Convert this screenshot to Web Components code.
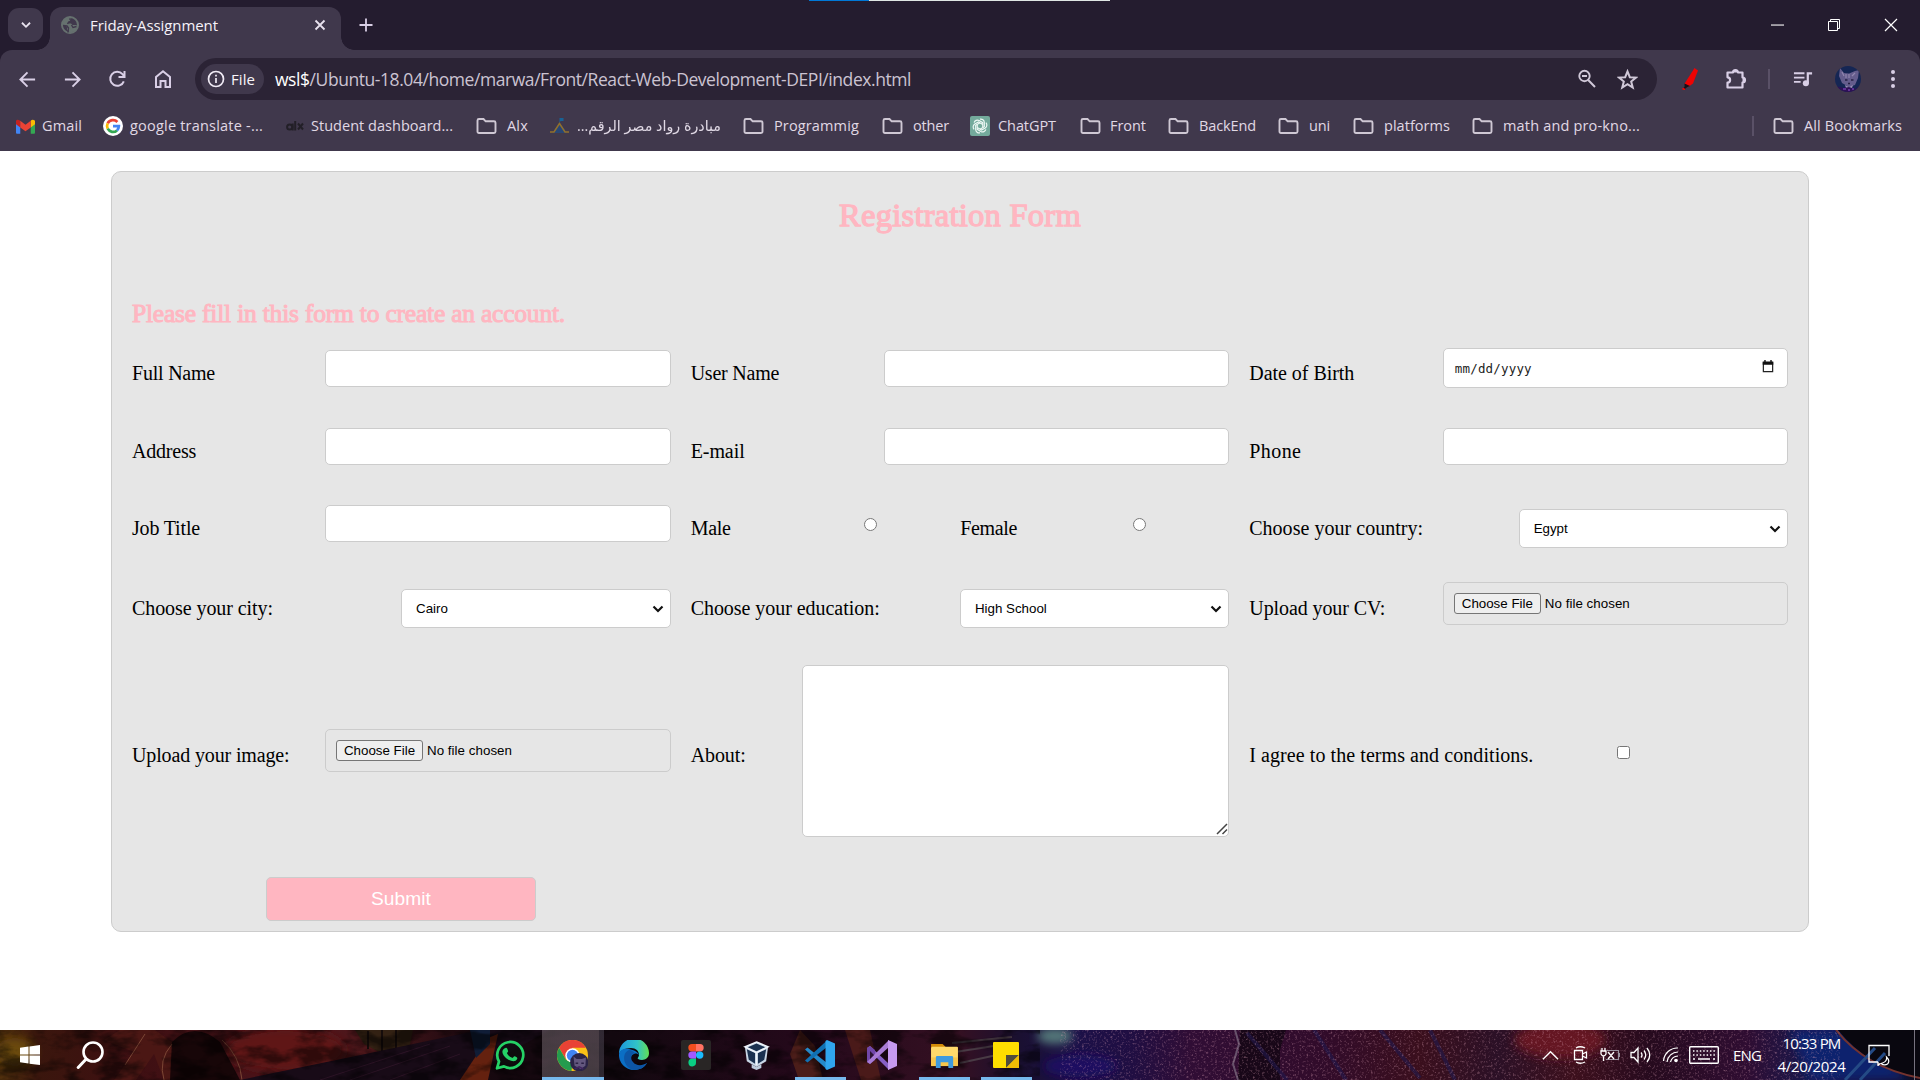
<!DOCTYPE html>
<html lang="en">
<head>
<meta charset="utf-8">
<title>Friday-Assignment</title>
<style>
html,body{margin:0;width:1920px;height:1080px;overflow:hidden;background:#fff}
</style>
</head>
<body>
<desktop-screen></desktop-screen>
<script>
const define=(name,css,html,after)=>customElements.define(name,class extends HTMLElement{
  connectedCallback(){
    if(this.shadowRoot)return;
    const root=this.attachShadow({mode:'open'});
    root.innerHTML=`<style>*{box-sizing:border-box}${css}</style>`+(typeof html==='function'?html(this):html);
    if(after)after(this,root);
  }
});

/* One line of text set to a fixed measure. */
define('fit-text',':host{display:inline-block;white-space:nowrap;flex:none}span{display:inline-block;transform-origin:0 50%}','<span><slot></slot></span>',(el,root)=>{
  const w=+el.getAttribute('w');if(!w)return;
  const s=root.querySelector('span'),n=s.getBoundingClientRect().width;
  el.style.width=w+'px';
  if(el.hasAttribute('squeeze'))s.style.transform=`scaleX(${w/n})`;
  else s.style.letterSpacing=(w-n)/el.textContent.length+'px';
});

const icons={
  chev:['0 0 20 20','<path d="M5.500 7.500 10 12l4.500-4.500" fill="none" stroke="#e8e2ee" stroke-width="2"/>'],
  globe:['0 0 18 18','<circle cx="9" cy="9" r="8" fill="#40384c" stroke="#66716f" stroke-width="2"/><path d="M8 1 3.500 3 1 7.500 1.500 10H5l1 1.500v2L9 17l6-2.500L17 10l-2-1h-3.500L10 7.500H7V6l3-1V3z" fill="#66716f"/><path d="M8.500 2.500 10 5 7.500 6.200 6.500 8M2 9.500l4 .5 1.500 2-.5 4.500M10.500 9l1.500 2.500 3.500-1" fill="none" stroke="#40384c" stroke-width="1.400"/>'],
  x:['0 0 12 12','<path d="m1.500 1.500 9 9m0-9-9 9" stroke="#e8e2ee" stroke-width="1.800"/>'],
  plus:['0 0 14 14','<path d="M7 .5v13M.5 7h13" stroke="#d9cfe6" stroke-width="1.800"/>'],
  min:['0 0 12 12','<path d="M0 6.500h12" stroke="#fff" stroke-width="1"/>'],
  restore:['0 0 14 14','<path d="M1.500 3.500h9v9h-9zM3.500 3V1.500h9v9H11" fill="none" stroke="#fff"/>'],
  close:['0 0 14 14','<path d="m1 1 12 12M13 1 1 13" stroke="#fff" stroke-width="1.200"/>'],
  back:['0 0 20 20','<path d="M18 10H3M10 2.500 2.500 10l7.500 7.500" fill="none" stroke="#d9cfe6" stroke-width="2"/>'],
  fwd:['0 0 20 20','<path d="M2 10h15M10 2.500l7.500 7.500-7.500 7.500" fill="none" stroke="#d9cfe6" stroke-width="2"/>'],
  reload:['0 0 20 20','<path d="M16.800 12.300a7 7 0 1 1-1.300-7.100l2 2M17.500 2v6h-6" fill="none" stroke="#d9cfe6" stroke-width="2"/>'],
  home:['0 0 20 20','<path d="M3 18V8l7-5.800L17 8v10h-4.500v-6h-5v6z" fill="none" stroke="#d9cfe6" stroke-width="2"/>'],
  info:['0 0 18 18','<circle cx="9" cy="9" r="7.500" fill="none" stroke="#f0ebf5" stroke-width="1.700"/><path d="M9 8v5M9 4.800v1.800" stroke="#f0ebf5" stroke-width="1.700"/>'],
  zoomout:['0 0 20 20','<circle cx="7.500" cy="7" r="5.200" fill="none" stroke="#d0c8d8" stroke-width="1.900"/><path d="M5 7h5M11.200 11l6.800 7" stroke="#d0c8d8" stroke-width="2"/>'],
  star:['0 0 20 20','<path d="m10 2.300 2.200 5.500 5.800.4-4.500 3.700 1.500 5.700-5-3.200-5 3.200 1.500-5.700L2 8.200l5.800-.4z" fill="none" stroke="#d0c8d8" stroke-width="1.900"/>'],
  pen:['0 0 20 22','<path d="m13.500 0 3.500 2.500-5 13-4.500 3.300-4-3z" fill="#ee0303"/><path d="M3.500 15.500 9 18l-3 1.300-2.300 2-1.400-.8 1.300-2z" fill="#151018"/><path d="m1.500 20.500 2.500 1" stroke="red" stroke-width="1.500"/>'],
  puzzle:['0 0 22 22','<path d="M2.500 4.500H8a2.500 2.500 0 0 1 5 0h4.500v5a2.500 2.500 0 0 1 0 5v5h-15v-5a2.600 2.600 0 0 0 0-5.200z" fill="none" stroke="#d9cfe6" stroke-width="2.200" stroke-linejoin="round"/><path d="M8 4.500a2.500 2.500 0 0 1 5 0m4.500 5a2.500 2.500 0 0 1 0 5" fill="#d9cfe6"/>'],
  music:['0 0 22 20','<path d="M1 3.500h11M1 8h11M1 12.500h7" stroke="#d9cfe6" stroke-width="2"/><circle cx="13.500" cy="14" r="3.200" fill="#d9cfe6"/><path d="M15.500 14V3.500H20" fill="none" stroke="#d9cfe6" stroke-width="2.300"/>'],
  cat:['0 0 26 26','<clipPath id="c"><circle cx="13" cy="13" r="13"/></clipPath><g clip-path="url(#c)"><path d="M0 0h26v26H0z" fill="#152654"/><path d="M5 2l4 5 5 .5L20 5l4-1-1 8-3 7-6 2-7-4-3-7z" fill="#655d8d"/><path d="M7 6l2 4M20 7l-3 3M11 8v4M14 8v4" stroke="#9186ae" stroke-width="1.200"/><path d="M10 14h2.500M16 14h2.500M13 17.500h2" stroke="#262044" stroke-width="1.600"/><path d="M10 19l4 2 4-2-1 3h-6z" fill="#9a8db5"/><path d="M0 20l9 2 5-1 6 2 6-4v7H0z" fill="#2e1156"/><path d="M8 23h3m2 1h2m2-1h2" stroke="#9351d4"/></g>'],
  dots:['0 0 6 20','<g fill="#d9cfe6"><circle cx="3" cy="3" r="2"/><circle cx="3" cy="10" r="2"/><circle cx="3" cy="17" r="2"/></g>'],
  folder:['0 0 21 18','<path d="M1.500 3.500q0-1.500 1.500-1.500h4.500l2.200 2.300H18q1.500 0 1.500 1.500v8.700q0 1.500-1.500 1.500H3q-1.500 0-1.500-1.500z" fill="none" stroke="#cfc8d4" stroke-width="1.900"/>'],
  gmail:['0 0 20 15','<path d="M0 2v12q0 1 1 1h3.500V6z" fill="#4285f4"/><path d="M20 2v12q0 1-1 1h-3.500V6z" fill="#34a853"/><path d="M15.500 1.500Q17.500-.500 20 1.500V5l-4.500 3.500z" fill="#fbbc04"/><path d="M0 2Q.5-.800 4.500 1.500v7L0 5z" fill="#c5221f"/><path d="M4.500 1.500 10 5.700l5.500-4.200v7L10 12.500 4.500 8.500z" fill="#ea4335"/>'],
  google:['0 0 20 20','<circle cx="10" cy="10" r="10" fill="#fff"/><g fill="none" stroke-width="2.700"><path d="M14.400 6A6 6 0 0 0 4.700 7.300" stroke="#ea4335"/><path d="M4.700 7.300a6 6 0 0 0 0 5.400" stroke="#fbbc05"/><path d="M4.700 12.700a6 6 0 0 0 9.300 1.700" stroke="#34a853"/><path d="M14 14.400a6 6 0 0 0 1.900-4.300H10" stroke="#4285f4"/></g>'],
  alx:['0 0 18 12','<g fill="none" stroke="#221f27" stroke-width="2"><circle cx="3.700" cy="7" r="2.600"/><path d="M6.700 3.500v7M9.200 1v9.500M12 3.500l5 6m0-6-5 6"/></g>'],
  depi:['0 0 21 16','<path d="m6 11 4.500-6 5 6 2 4h-14z" fill="#284675"/><path d="M1 14h4l5.500-8.500L16 14h4" fill="none" stroke="#92702b" stroke-width="1.500"/><path d="M10.500 5V0h4v3h-3" fill="#186295"/>'],
  gpt:['0 0 20 20','<rect width="20" height="20" rx="2" fill="#74aa9c"/><g fill="none" stroke="#eef8f5" stroke-width="1.200"><g id="p"><path d="M10 3.200a3.500 3.500 0 0 1 4.300 3.300v4.200L10 13.200"/></g><use href="#p" transform="rotate(60 10 10)"/><use href="#p" transform="rotate(120 10 10)"/><use href="#p" transform="rotate(180 10 10)"/><use href="#p" transform="rotate(240 10 10)"/><use href="#p" transform="rotate(300 10 10)"/></g>'],
  cal:['0 0 12 14','<path d="M1 3h10v9.500H1z" fill="none" stroke="#222" stroke-width="1.300"/><path d="M.3 1.500h11.400V5H.3zM2 0h1.500v2H2zM8.500 0H10v2H8.500z" fill="#111"/>'],
  caret:['0 0 12 8','<path d="m1.500 1.500 4.500 4.500 4.500-4.500" fill="none" stroke="#111" stroke-width="2.200"/>'],
  grip:['0 0 12 12','<path d="M1 11 11 1M6.500 11 11 6.500" stroke="#444" stroke-width="1.500"/>'],
  win:['0 0 20 20','<path d="M0 2.800 8.500 1.600v8H0zM9.500 1.400 20 0v9.600H9.500zM0 10.500h8.500v8L0 17.200zM9.500 10.500H20V20L9.500 18.700z" fill="#fff"/>'],
  search:['0 0 28 28','<circle cx="17" cy="11" r="9.500" fill="none" stroke="#fff" stroke-width="2.600"/><path d="m10.200 18-8 8.500" stroke="#fff" stroke-width="3" stroke-linecap="round"/>'],
  whats:['0 0 30 30','<path d="M2 28.300 4 21.500A13 13 0 1 1 9 26.400z" fill="#06120b" fill-opacity=".5" stroke="#25d366" stroke-width="2.700" stroke-linejoin="round"/><path d="M10.500 8c1.400-.5 1.700.3 2.600 3 .2.700-1 1.400-1.200 2 1.400 2.700 3 4 5.600 5 .8-.4 1.400-2 2.200-1.700 2.700 1.300 3 1.400 2.300 3-1.200 2.500-5 2.300-8.500.4-3-1.600-6-5-6.100-8C7.300 10 8.600 8.700 10.500 8z" fill="#25d366"/>'],
  chrome:['0 0 30 30','<circle cx="15" cy="15" r="15" fill="#fbc116"/><path d="M2 7.500A15 15 0 0 1 28 7.500H15L8.500 18.500z" fill="#e94235"/><path d="M2 7.500 8.700 19 15 22.500 14 30A15 15 0 0 1 2 7.500z" fill="#249b4e"/><circle cx="15" cy="15" r="7" fill="#fff"/><circle cx="15" cy="15" r="5.500" fill="#4285f4"/><circle cx="21.500" cy="21.500" r="8.800" fill="#2b2447"/><path d="m16 16 3 2.500h5l4-1.500-.5 8-4.500 3-6-3z" fill="#63577e"/><path d="M18 22.500h2.500m3 0H26" stroke="#2b2145" stroke-width="1.500"/><path d="m17 28 4.500-2 4 2" stroke="#40255f" stroke-width="1.500" fill="none"/>'],
  edge:['0 0 30 30','<defs><linearGradient id="a" x2="1"><stop stop-color="#1b98de"/><stop offset=".6" stop-color="#31c3c8"/><stop offset="1" stop-color="#62df54"/></linearGradient></defs><path d="M0 14A15 15 0 0 1 30 13c0 7-7 8-11 6-1-1 1-2 1-4 0-4-3-7-8-7C6 8 1 11 0 14z" fill="url(#a)"/><path d="M0 14C1 9 6 8 10 9c5 1 9 3 10 6-1-1-3-2-5-1-5 2-4 8 0 11 4 3 9 1 13-2-3 5-8 7-13 7A15 15 0 0 1 0 14z" fill="#0b6fc5"/><path d="M10 10c-8 3-6 18 5 20 5 0 10-2 13-7-5 3-11 3-14-1-3-3-2-8 2-9-2-2-4-3-6-3z" fill="#0d55a5"/>'],
  figma:['0 0 30 30','<rect width="30" height="30" rx="2" fill="#292625"/><path d="M11 4h4v7.400h-4a3.700 3.700 0 0 1 0-7.400z" fill="#f24e1e"/><path d="M15 4h4a3.700 3.700 0 0 1 0 7.400h-4z" fill="#ff7262"/><path d="M11 11.400h4v7.400h-4a3.700 3.700 0 0 1 0-7.400z" fill="#a259ff"/><circle cx="18.700" cy="15.100" r="3.700" fill="#1abcfe"/><path d="M11 18.800h4v3.700a3.800 3.800 0 1 1-4-3.700z" fill="#0acf83"/>'],
  vbox:['0 0 30 30','<path d="m15 1 12 5-2 15-10 6-10-6L3 6z" fill="#c8d6e5"/><path d="m15 2.500 9 4-9 4-9-4zM5 8.500l8.500 4v11L7 19.500zM25 8.500l-8.500 4v11l6.500-4z" fill="#1a3150"/><path d="m15 1 12 5-12 6L3 6zM15 12v13" fill="none" stroke="#eef4fb" stroke-width="1.500"/><path d="M10 24v4l5 2 5-2v-4l-5 3z" fill="#bdcbdc"/>'],
  code:['0 0 30 30','<path d="M0 9.500 2.500 7.500 22 23v6.500z" fill="#2489ca"/><path d="M0 20.500 2.500 22.500 22 7V.500z" fill="#1070b3"/><path d="M22 0 30 3.500v23L22 30l-1.500-1V1z" fill="#30a5ee"/>'],
  vs:['0 0 30 30','<path d="M0 8 3 6l19 18v6z" fill="#865fc5"/><path d="M0 8l3-2 5 4v10l-5 4-3-2z" fill="#7047a8"/><path d="M0 22l3 2L22 7V0z" fill="#a87bd4"/><path d="m21 0 9 4v22l-9 4z" fill="#c69aef"/><path d="M3 11v8l4-4z" fill="#2b1333"/>'],
  explorer:['0 0 30 26','<path d="M1 1h12l3 3v4H1z" fill="#d38b08"/><path d="M2 4h26q1 0 1 1v18H1V5z" fill="#ffd96b"/><path d="M1 15h28v9H1z" fill="#f8c64b"/><path d="M6 26V15q0-1.500 1.500-1.500h15q1.500 0 1.500 1.500v11h-5v-6h-8v6z" fill="#3f9ade"/>'],
  note:['0 0 26 26','<rect width="26" height="26" rx="1" fill="#ffde00"/><path d="M13 26V13h13z" fill="#514d3c"/><path d="M13 26 26 13v13z" fill="#f0bc05"/>'],
  up:['0 0 18 18','<path d="m1 13 8-8 8 8" fill="none" stroke="#fff" stroke-width="1.400"/>'],
  meet:['0 0 18 20','<path d="M2.500 5.500h8v9h-8zM10.500 9l4-2v6l-4-2M4 3q4-2.500 9 0M4 17q4 2.500 9 0" fill="none" stroke="#fff" stroke-width="1.300"/>'],
  batt:['0 0 20 18','<path d="M7 4.500h11.500v9H6M19.500 7v4" fill="none" stroke="#9a94a0" stroke-width="1.200"/><path d="M1 5h5v3q-1 2-2.500 2T1 8zM2 2v3M5 2v3M3.500 10v5M8 6l6 7m0-7-6 7" fill="none" stroke="#fff" stroke-width="1.300"/>'],
  sound:['0 0 21 18','<path d="M1 6.500h3L8 2v14l-4-4.500H1z" fill="none" stroke="#fff" stroke-width="1.300"/><path d="M11 6.500q2 2.500 0 5M14 4.500q3.500 4.500 0 9M17 2q5.500 7 0 14" fill="none" stroke="#fff" stroke-width="1.300"/>'],
  wifi:['0 0 18 18','<path d="M1.500 15A14 14 0 0 1 16 2M5 16A11 11 0 0 1 16 6M8.500 16A8 8 0 0 1 16 10" fill="none" stroke="#fff" stroke-width="1.200"/><circle cx="14" cy="14.500" r="1.800" fill="#fff"/>'],
  kbd:['0 0 30 18','<rect x=".7" y=".7" width="28.600" height="16.600" rx="1" fill="none" stroke="#fff" stroke-width="1.400"/><path d="M4 5h23M4 9h23" stroke="#fff" stroke-width="1.600" stroke-dasharray="1.500 1.900"/><path d="M4 13h2m3 0h12m3 0h2" stroke="#fff" stroke-width="1.500"/>'],
  bell:['0 0 22 22','<path d="M10 18H1V1.500h20V12M10 18v3.500l2-2" fill="none" stroke="#fff" stroke-width="1.300"/><path d="M18.500 13q1 5-5.500 6.500 3.500 2.500 6.500.5 3-3-1-7z" fill="none" stroke="#fff" stroke-width="1.200"/>']
};
define('ui-icon',':host{display:inline-flex;flex:none;align-items:center;justify-content:center}svg{display:block;width:100%;height:100%}',
  el=>{const[v,p]=icons[el.getAttribute('name')];return `<svg viewBox="${v}">${p}</svg>`},
  el=>{el.style.width=el.getAttribute('w')+'px';el.style.height=(el.getAttribute('h')||el.getAttribute('w'))+'px'});

/* Fixed cell that centres its icon. */
define('icon-cell',':host{display:flex;flex:none;align-items:center;justify-content:center;height:100%}','<slot></slot>',el=>{el.style.width=el.getAttribute('w')+'px'});

define('tab-strip',`
:host{display:flex;height:50px;background:#241c2f;position:relative;align-items:stretch}
.line{position:absolute;left:809px;top:0;width:301px;height:1px;background:linear-gradient(90deg,#0078d7 60px,#dfe6e4 60px)}
.srch{width:35px;height:34px;margin:8px 0 0 8px;border-radius:11px;background:#40384c;display:flex;align-items:center;justify-content:center}
.tab{position:relative;width:291px;height:43px;margin:7px 0 0 7px;background:#40384c;border-radius:12px 12px 0 0;display:flex;align-items:center;padding:0 12px 7px 11px;font:500 15px "Open Sans","Noto Sans",sans-serif;color:#f6f2f9}
.tab:before,.tab:after{content:"";position:absolute;bottom:0;width:13px;height:13px}
.tab:before{left:-13px;background:radial-gradient(circle at 0 0,transparent 12.500px,#40384c 13px)}
.tab:after{right:-13px;background:radial-gradient(circle at 100% 0,transparent 12.500px,#40384c 13px)}
.name{margin-left:11px}.gap{flex:1}
.new{margin-left:12px;height:50px}.wins{margin-left:auto;display:flex;height:49px;padding-right:1px}`,
`<i class="line"></i><div class="srch"><ui-icon name="chev" w="18"></ui-icon></div>
<div class="tab"><ui-icon name="globe" w="18"></ui-icon><fit-text class="name" w="128">Friday-Assignment</fit-text><span class="gap"></span><ui-icon name="x" w="12" style="margin-right:3px"></ui-icon></div>
<icon-cell class="new" w="25"><ui-icon name="plus" w="14"></ui-icon></icon-cell>
<div class="wins"><icon-cell w="56"><ui-icon name="min" w="13"></ui-icon></icon-cell><icon-cell w="57"><ui-icon name="restore" w="14"></ui-icon></icon-cell><icon-cell w="57"><ui-icon name="close" w="14"></ui-icon></icon-cell></div>`);

define('nav-bar',`
:host{display:block;height:56px;background:#241c2f}
.bar{height:56px;display:flex;align-items:center;background:#40384c;border-radius:12px 12px 0 0;padding:0 5px 0 5px;box-sizing:border-box}
.box{width:1462px;height:42px;border-radius:21px;background:#2b2335;margin:2px 0 0 10px;display:flex;align-items:center;padding-left:6px;color:#cbc3d2;font:17.500px "Open Sans","Noto Sans",sans-serif}
.chip{width:63px;height:30px;border-radius:15px;background:#40384c;display:flex;align-items:center;padding-left:6px;color:#f8f5fa;font-size:15px;font-weight:500;margin-right:11px;gap:6px}
b{font-weight:400;color:#fff}.end{margin-left:auto;display:flex;padding-right:10px}
.in{padding-top:2px;display:flex;align-items:center}
.sep{width:2px;height:20px;background:#5a5167;margin:0 11px 0 10px}`,
`<div class="bar"><div class="in"><icon-cell w="45"><ui-icon name="back" w="19"></ui-icon></icon-cell><icon-cell w="44"><ui-icon name="fwd" w="19"></ui-icon></icon-cell><icon-cell w="46"><ui-icon name="reload" w="20"></ui-icon></icon-cell><icon-cell w="45"><ui-icon name="home" w="20"></ui-icon></icon-cell></div>
<div class="box"><div class="chip"><ui-icon name="info" w="18"></ui-icon><fit-text w="24">File</fit-text></div><fit-text w="636"><b>wsl$</b>/Ubuntu-18.04/home/marwa/Front/React-Web-Development-DEPI/index.html</fit-text><div class="end"><icon-cell w="40"><ui-icon name="zoomout" w="20"></ui-icon></icon-cell><icon-cell w="40"><ui-icon name="star" w="21"></ui-icon></icon-cell></div></div>
<div class="in"><icon-cell w="46" style="margin-left:11px"><ui-icon name="pen" w="20" h="22"></ui-icon></icon-cell><icon-cell w="44"><ui-icon name="puzzle" w="22"></ui-icon></icon-cell><div class="sep"></div><icon-cell w="44"><ui-icon name="music" w="21"></ui-icon></icon-cell><icon-cell w="45"><ui-icon name="cat" w="26"></ui-icon></icon-cell><icon-cell w="45"><ui-icon name="dots" w="6" h="20"></ui-icon></icon-cell></div></div>`);

define('book-mark',':host{display:flex;flex:none;align-items:center}.i{display:flex;width:20px;justify-content:center;flex:none}fit-text{padding-bottom:1px}',
  el=>`<span class="i"><ui-icon name="${el.getAttribute('icon')}" w="${el.getAttribute('iw')||21}" h="${el.getAttribute('ih')||18}"></ui-icon></span><fit-text w="${el.getAttribute('tw')}" ${el.hasAttribute('rtl')?'squeeze':''}>${el.hasAttribute('rtl')?'<bdi dir="rtl">'+el.textContent+'</bdi>':el.textContent}</fit-text>`,
  (el,r)=>{el.style.width=el.getAttribute('w')+'px';r.querySelector('fit-text').style.marginLeft=(el.getAttribute('o')-20)+'px'});

define('bookmark-bar',`
:host{display:flex;align-items:center;height:45px;background:#40384c;padding:0 0 5px 15px;color:#e0d9e5;font:500 14.500px "Open Sans","Noto Sans","DejaVu Sans",sans-serif;box-sizing:border-box}
.sep{width:2px;height:20px;background:#5a5167;margin-right:19px}`,
`<book-mark icon="gmail" iw="19" ih="15" w="88" o="27" tw="40">Gmail</book-mark>
<book-mark icon="google" iw="20" ih="20" w="182" o="27" tw="133">google translate -...</book-mark>
<book-mark icon="alx" iw="18" ih="12" w="191" o="26" tw="142">Student dashboard...</book-mark>
<book-mark icon="folder" w="73" o="31" tw="21">Alx</book-mark>
<book-mark icon="depi" iw="21" ih="16" w="194" o="28" tw="144" rtl>مبادرة رواد مصر الرقم...</book-mark>
<book-mark icon="folder" w="139" o="31" tw="85">Programmig</book-mark>
<book-mark icon="folder" w="88" o="31" tw="36">other</book-mark>
<book-mark icon="gpt" iw="20" ih="20" w="110" o="28" tw="58">ChatGPT</book-mark>
<book-mark icon="folder" w="88" o="30" tw="36">Front</book-mark>
<book-mark icon="folder" w="110" o="31" tw="57">BackEnd</book-mark>
<book-mark icon="folder" w="75" o="31" tw="21">uni</book-mark>
<book-mark icon="folder" w="119" o="31" tw="66">platforms</book-mark>
<book-mark icon="folder" w="280" o="31" tw="137">math and pro-kno...</book-mark>
<div class="sep"></div>
<book-mark icon="folder" w="130" o="31" tw="98">All Bookmarks</book-mark>`);

/* Label plus control; "off" is the width of the label column. */
define('form-field',`:host{display:flex;align-items:flex-start;flex:none}
.l{flex:none;font:20px/24px "Liberation Serif",serif;color:#000;padding-top:var(--label-top,16px)}`,
  el=>`<div class="l"><fit-text w="${el.getAttribute('tw')}">${el.getAttribute('label')}</fit-text></div><slot></slot>`,
  (el,r)=>{r.querySelector('.l').style.width=el.getAttribute('off')+'px';el.style.width=(el.getAttribute('w')||538.67)+'px'});

define('text-box',':host{display:block;width:345.500px;height:37px;flex:none}input{width:100%;height:100%;display:block;border:1px solid #ccc;border-radius:5px;background:#fff;padding:10px;margin:0}','<input type="text">');
define('date-box',':host{display:flex;flex:none;width:345px;height:40px;box-sizing:border-box;border:1px solid #ccc;border-radius:5px;background:#fff;align-items:center;padding:1px 13px 0 11px;justify-content:space-between;font:12.500px "DejaVu Sans Mono","Liberation Mono",monospace;color:#222}','<fit-text w="77">mm/dd/yyyy</fit-text><ui-icon name="cal" w="12" h="13" style="margin-top:-4px"></ui-icon>');
define('file-box',':host{display:flex;flex:none;width:345.500px;height:43px;box-sizing:border-box;border:1px solid #ccc;border-radius:5px;padding:10px;gap:4px;align-items:center;font:13.333px/15px "Liberation Sans",Arial,sans-serif;color:#000}button{font:inherit;width:87px;height:21px;padding:1px 0;border:1px solid #767676;border-radius:3px;background:#efefef;color:#000;white-space:nowrap;text-align:center}','<button>Choose File</button><fit-text w="85">No file chosen</fit-text>');
define('select-box',':host{display:block;flex:none;width:269.500px;height:39px;position:relative}select{appearance:none;width:100%;height:100%;display:block;margin:0;border:1px solid #ccc;border-radius:5px;background:#fff;color:#000;padding:10px 14px;font:13.333px "Liberation Sans",Arial,sans-serif}ui-icon{position:absolute;right:7px;top:16px;pointer-events:none}',el=>`<select><option>${el.textContent}</option></select><ui-icon name="caret" w="12" h="8"></ui-icon>`);
define('check-mark',':host{display:block;flex:none;width:13px;height:13px}input{display:block;margin:0;width:13px;height:13px}',el=>`<input type="${el.getAttribute('type')}">`);
define('area-box',':host{display:block;flex:none;width:427px;height:172px;position:relative}textarea{display:block;width:100%;height:100%;margin:0;border:1px solid #ccc;border-radius:5px;background:#fff;resize:none}ui-icon{position:absolute;right:1px;bottom:2px}','<textarea></textarea><ui-icon name="grip" w="12"></ui-icon>');

define('form-row',':host{display:flex;gap:20px;align-items:flex-start}','<slot></slot>',el=>{el.style.height=el.getAttribute('h')+'px'});

define('registration-form',`
:host{display:block;width:1698px;height:761px;margin:20px 0 0 111px;background:#e6e6e6;border:1px solid #ccc;border-radius:10px;padding:0 20px;box-sizing:border-box;font-family:"Liberation Serif",serif}
h1,h3{margin:0;font-weight:400;color:#ffb6c1}
h1{-webkit-text-stroke:1.300px #ffb6c1}h3{-webkit-text-stroke:1px #ffb6c1}
h1{text-align:center;font-size:32.500px;line-height:40px;padding-top:23px;height:127px}
h3{font-size:25.500px;line-height:30px;height:46px}
.d{margin-top:5px}
button{margin:7px 0 0 134px;width:270px;height:44px;display:flex;align-items:center;justify-content:center;border:1px solid #ccc;border-radius:5px;background:#ffb6c1;color:#fff;font:19.200px "Liberation Sans",Arial,sans-serif;padding:0}`,
`<h1><fit-text w="242">Registration Form</fit-text></h1>
<h3><fit-text w="433">Please fill in this form to create an account.</fit-text></h3>
<form-row h="78"><form-field label="Full Name" tw="83" off="193"><text-box class="d"></text-box></form-field><form-field label="User Name" tw="88.5" off="193"><text-box class="d"></text-box></form-field><form-field label="Date of Birth" tw="105" off="193.500"><date-box style="margin-top:3px"></date-box></form-field></form-row>
<form-row h="77"><form-field label="Address" tw="64" off="193"><text-box class="d"></text-box></form-field><form-field label="E-mail" tw="54" off="193"><text-box class="d"></text-box></form-field><form-field label="Phone" tw="52" off="193.500"><text-box class="d"></text-box></form-field></form-row>
<form-row h="77"><form-field label="Job Title" tw="68" off="193"><text-box class="d"></text-box></form-field><form-field label="Male" tw="40" off="173" w="249.5"><check-mark type="radio" style="margin-top:18px"></check-mark></form-field><form-field label="Female" tw="57" off="173" w="269"><check-mark type="radio" style="margin-top:18px"></check-mark></form-field><form-field label="Choose your country:" tw="174" off="269.500"><select-box style="margin-top:9px">Egypt</select-box></form-field></form-row>
<form-row h="83" style="--label-top:19px"><form-field label="Choose your city:" tw="141" off="269"><select-box style="margin-top:12px">Cairo</select-box></form-field><form-field label="Choose your education:" tw="189" off="269.300"><select-box style="margin-top:12px">High School</select-box></form-field><form-field label="Upload your CV:" tw="136" off="193.500"><file-box class="d"></file-box></form-field></form-row>
<form-row h="210" style="--label-top:83px"><form-field label="Upload your image:" tw="157.5" off="193"><file-box style="margin-top:69px"></file-box></form-field><form-field label="About:" tw="55" off="111.500"><area-box class="d"></area-box></form-field><form-field label="I agree to the terms and conditions." tw="284" off="368"><check-mark type="checkbox" style="margin-top:86px"></check-mark></form-field></form-row>
<button><fit-text w="60">Submit</fit-text></button>`);

/* Night-sky wallpaper strip showing through the taskbar. */
define('task-wallpaper',':host{position:absolute;inset:0;display:block}svg{display:block}',`
<svg width="1920" height="50" viewBox="0 0 1920 50" preserveAspectRatio="none"><defs>
<linearGradient id="g"><stop stop-color="#51300d"/><stop offset=".02" stop-color="#3a160d"/><stop offset=".07" stop-color="#3e0f12"/><stop offset=".15" stop-color="#4a141b"/><stop offset=".19" stop-color="#4f171b"/><stop offset=".25" stop-color="#17080f"/><stop offset=".32" stop-color="#12080f"/><stop offset=".42" stop-color="#25091b"/><stop offset=".5" stop-color="#341022"/><stop offset=".53" stop-color="#1a1030"/><stop offset=".56" stop-color="#1c1048"/><stop offset=".59" stop-color="#200e42"/><stop offset=".62" stop-color="#300d35"/><stop offset=".69" stop-color="#310b2a"/><stop offset=".74" stop-color="#3a0f1d"/><stop offset=".78" stop-color="#2b1026"/><stop offset=".82" stop-color="#3d101d"/><stop offset=".86" stop-color="#260a1e"/><stop offset=".91" stop-color="#2f0d32"/><stop offset=".95" stop-color="#121a52"/><stop offset="1" stop-color="#100a18"/></linearGradient>
<filter id="n" x="0" y="0" width="100%" height="100%"><feTurbulence type="fractalNoise" baseFrequency=".45" numOctaves="3" seed="4"/><feColorMatrix values="0 0 0 0 .7  0 0 0 0 .35  0 0 0 0 .45  3 0 0 0 -1.600"/></filter>
<filter id="m" x="0" y="0" width="100%" height="100%"><feTurbulence type="fractalNoise" baseFrequency=".03 .06" numOctaves="4" seed="9"/><feColorMatrix values="0 0 0 0 0  0 0 0 0 0  0 0 0 0 0  0 4 0 0 -1.700"/></filter>
<filter id="b" x="-20%" y="-50%" width="140%" height="200%"><feGaussianBlur stdDeviation="5"/></filter></defs>
<path fill="url(#g)" d="M0 0h1920v50H0z"/>
<g filter="url(#b)"><ellipse cx="15" cy="22" rx="20" ry="14" fill="#6b4a0a"/><ellipse cx="285" cy="20" rx="60" ry="22" fill="#5e1916"/><ellipse cx="1055" cy="6" rx="18" ry="8" fill="#54797a"/><ellipse cx="1080" cy="36" rx="36" ry="11" fill="#1e1160"/><ellipse cx="1560" cy="10" rx="45" ry="18" fill="#651320"/><path d="M1790 0h60l60 50h-100z" fill="#10226e"/></g>
<path d="M104 10 120 0h35l25 18 12 32h-28l-10-26-18 26h-22l20-28z" fill="#4b1714"/><path d="M172 12q22-22 48 0l20 38h-70z" fill="#170608"/><path d="M172 14q-14 16-8 36M222 10q18 16 20 40M125 35 145 4" fill="none" stroke="#7c4735" stroke-width="1"/>
<path d="M355 0h58l-5 24-16 5-28-15z" fill="#332113"/><path d="M368 1v18M382 0v22M396 0v24" stroke="#160c0b" stroke-width="2"/>
<path d="M240 50 375 22 480 0h70l-90 50z" fill="#180b17"/><path d="M320 50 430 14M350 50l100-34M390 50l70-26" stroke="#2c1426"/><path d="m460 50 28-42 10-4-10 46z" fill="#64210f"/><path d="m470 0 6 28 14-14V0z" fill="#101d37"/>
<path d="m800 0 15 16 8 34h-24l-9-26z" fill="#4b1d19"/><path d="m845 0 16 50h20L870 0z" fill="#4a1a19"/><path d="m952 13 60-6M955 22l52-8M960 33l46-10" stroke="#493b45" stroke-width="2"/>
<path d="M1240 0h46l-6 20v30h-42z" fill="#180718"/><path d="m1235 0 4 14-6 20 5 16" fill="none" stroke="#67526b" stroke-width="2"/><path d="m1247 3 40 47M1314 0l32 50M1380 0l40 48M1430 0l25 50" stroke="#21194d" stroke-width="4" opacity=".6"/>
<path d="M1838 0q30 38 82 48V0z" fill="#09070f"/><path d="M1836 0q30 38 84 48" fill="none" stroke="#74332e" stroke-width="2"/><path d="m1845 50 30-32m-15 32 25-27" stroke="#244a85" stroke-width="3"/>
<path filter="url(#m)" d="M0 0h1040v50H0z" opacity=".5"/><path filter="url(#n)" d="M1060 0h780v50h-780z" opacity=".4"/></svg>`);

define('task-app',`:host{display:flex;flex:none;width:62px;height:50px;align-items:center;justify-content:center;position:relative}
:host([open])::after{content:"";position:absolute;left:6px;right:5px;bottom:0;height:3px;background:#76b9ed}
:host([active]){background:linear-gradient(90deg,rgba(125,112,120,.5) 57px,rgba(65,58,70,.65) 57px)}
:host([active])::after{content:"";position:absolute;left:0;right:0;bottom:0;height:3px;background:#76b9ed}`,'<slot></slot>');

define('task-bar',`
:host{display:flex;position:relative;width:1920px;height:50px;overflow:hidden;align-items:center;color:#fff;font-family:"Open Sans","Noto Sans",sans-serif}
.start,.apps,.tray{position:relative;display:flex;align-items:center;height:50px}
.apps{margin-left:359px}.tray{margin-left:auto}
.clock{width:83px;font-size:15px;line-height:23px;text-align:center;height:50px;padding-top:2px;margin-left:9px;margin-right:-1px}
.clock div{height:23px}.end{width:1px;height:50px;background:#77727f;margin-left:13px;margin-right:5px}`,
`<task-wallpaper></task-wallpaper><div class="start"><icon-cell w="60"><ui-icon name="win" w="20"></ui-icon></icon-cell><icon-cell w="60"><ui-icon name="search" w="28"></ui-icon></icon-cell></div>
<div class="apps"><task-app><ui-icon name="whats" w="30"></ui-icon></task-app><task-app active style="margin-left:1px"><ui-icon name="chrome" w="31" style="margin-right:2px"></ui-icon></task-app><task-app><ui-icon name="edge" w="30" style="margin-right:2px"></ui-icon></task-app><task-app><ui-icon name="figma" w="30" style="margin-right:2px"></ui-icon></task-app><task-app><ui-icon name="vbox" w="29" style="margin-right:6px"></ui-icon></task-app><task-app open style="margin-left:-1px"><ui-icon name="code" w="30"></ui-icon></task-app><task-app><ui-icon name="vs" w="30"></ui-icon></task-app><task-app open><ui-icon name="explorer" w="29" h="25"></ui-icon></task-app><task-app open><ui-icon name="note" w="26"></ui-icon></task-app></div>
<div class="tray"><icon-cell w="31"><ui-icon name="up" w="17"></ui-icon></icon-cell><icon-cell w="29"><ui-icon name="meet" w="18" h="20"></ui-icon></icon-cell><icon-cell w="30"><ui-icon name="batt" w="20" h="18"></ui-icon></icon-cell><icon-cell w="31"><ui-icon name="sound" w="21" h="18"></ui-icon></icon-cell><icon-cell w="29"><ui-icon name="wifi" w="18"></ui-icon></icon-cell><icon-cell w="38"><ui-icon name="kbd" w="30" h="18"></ui-icon></icon-cell><fit-text w="28" style="margin-left:10px;font-size:15px">ENG</fit-text><div class="clock"><div><fit-text w="58">10:33 PM</fit-text></div><div><fit-text w="68">4/20/2024</fit-text></div></div><icon-cell w="42" style="margin-left:6px;margin-right:1px"><ui-icon name="bell" w="22"></ui-icon></icon-cell><i class="end"></i></div>`);

define('desktop-screen',`:host{display:flex;flex-direction:column;width:1920px;height:1080px;background:#fff}main{flex:1;min-height:0}`,
`<tab-strip></tab-strip><nav-bar></nav-bar><bookmark-bar></bookmark-bar><main><registration-form></registration-form></main><task-bar></task-bar>`);
</script>
</body>
</html>
